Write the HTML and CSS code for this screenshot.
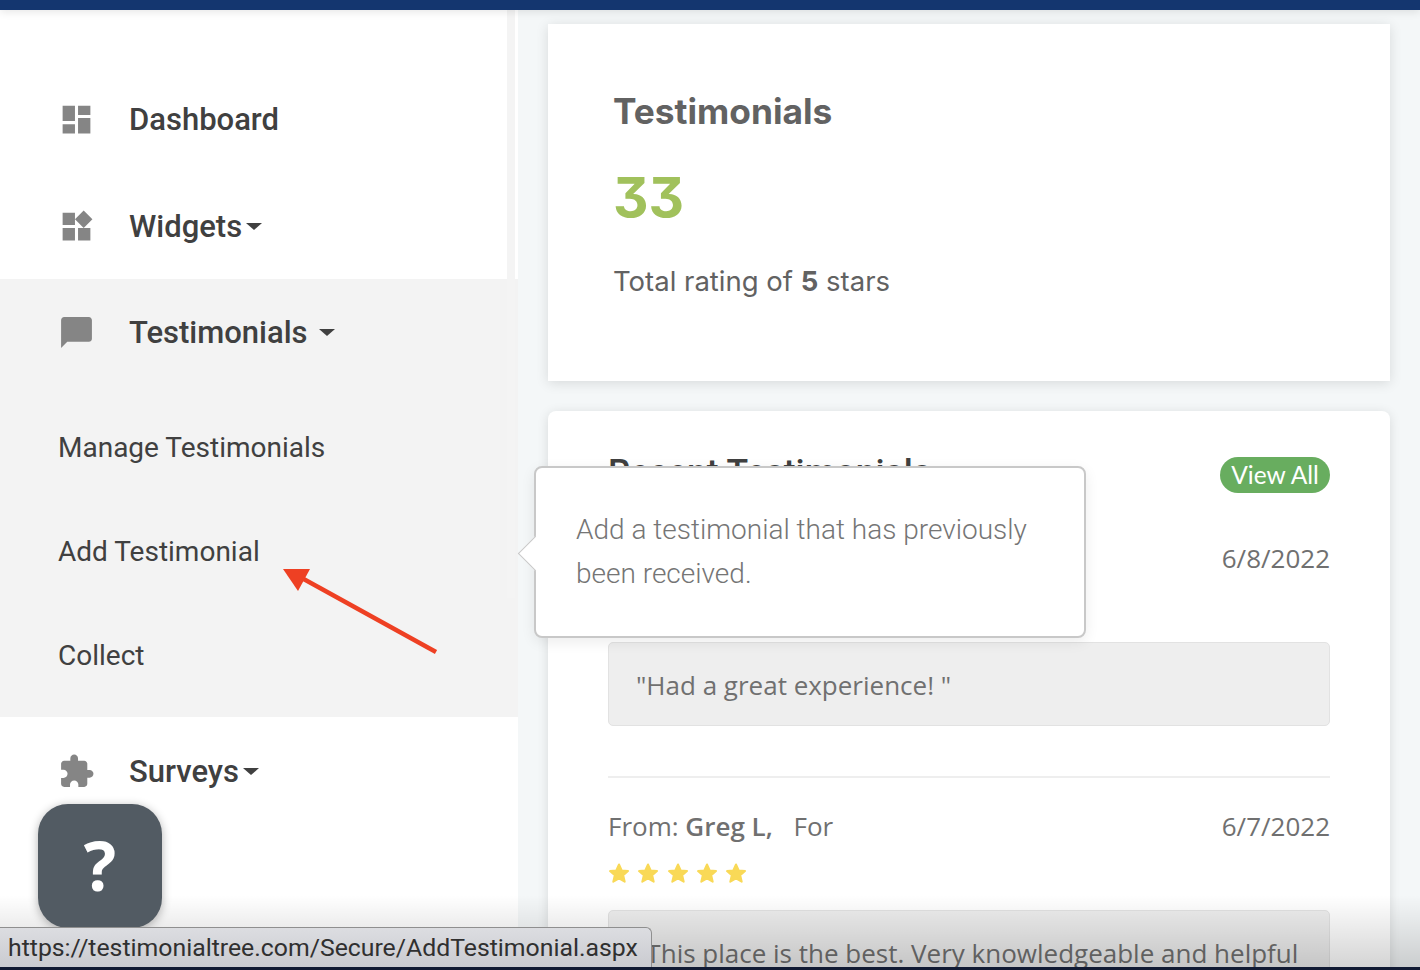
FILE: index.html
```html
<!DOCTYPE html>
<html lang="en">
<head>
  <meta charset="UTF-8">
  <title>Testimonials</title>
  <link rel="stylesheet" href="styles.css">
</head>
<body>
  <svg class="defs" width="0" height="0">
    <symbol id="star" viewBox="0 0 24 24">
      <path d="M12 3.500l2.700 6 6.300.6-4.800 4.200 1.500 6.400-5.700-3.400-5.700 3.400 1.500-6.400L3 10.100l6.300-.6z"/>
    </symbol>
  </svg>

  <div class="topbar"></div>

  <div class="layout">
    <aside class="sidebar">
      <a class="nav-item">
        <svg class="nav-icon" viewBox="0 0 24 24"><path d="M3 13h8V3H3v10zm0 8h8v-6H3v6zm10 0h8V11h-8v10zm0-18v6h8V3h-8z"/></svg>
        <span>Dashboard</span>
      </a>
      <a class="nav-item nudge">
        <svg class="nav-icon" viewBox="0 0 24 24"><path d="M13 13v8h8v-8h-8zM3 21h8v-8H3v8zM3 3v8h8V3H3zm13.660-1.310L11 7.340 16.660 13l5.660-5.660-5.660-5.650z"/></svg>
        <span>Widgets</span><i class="caret tight"></i>
      </a>
      <div class="nav-group">
        <a class="nav-item">
          <svg class="nav-icon" viewBox="0 0 24 24"><path d="M20 2H4c-1.100 0-1.990.9-1.990 2L2 22l4-4h14c1.100 0 2-.9 2-2V4c0-1.100-.9-2-2-2z"/></svg>
          <span>Testimonials</span><i class="caret"></i>
        </a>
        <div class="sub-list">
          <a class="sub-item">Manage Testimonials</a>
          <a class="sub-item">Add Testimonial</a>
          <a class="sub-item">Collect</a>
        </div>
      </div>
      <a class="nav-item nudge">
        <svg class="nav-icon" viewBox="0 0 24 24"><path d="M20.500 11H19V7c0-1.100-.9-2-2-2h-4V3.500C13 2.120 11.880 1 10.500 1S8 2.120 8 3.500V5H4c-1.100 0-1.990.9-1.990 2v3.800H3.500c1.490 0 2.700 1.210 2.700 2.700s-1.210 2.700-2.700 2.700H2V20c0 1.100.9 2 2 2h3.800v-1.500c0-1.490 1.210-2.700 2.700-2.700 1.490 0 2.700 1.210 2.700 2.700V22H17c1.100 0 2-.9 2-2v-4h1.500c1.380 0 2.500-1.120 2.500-2.500S21.880 11 20.500 11z"/></svg>
        <span>Surveys</span><i class="caret tight"></i>
      </a>
    </aside>

    <main class="main">
      <section class="card summary">
        <h2 class="summary-title">Testimonials</h2>
        <div class="summary-count">33</div>
        <p class="summary-text">Total rating of <b>5</b> stars</p>
      </section>

      <section class="card recent">
        <div class="recent-head">
          <h2 class="recent-title">Recent Testimonials</h2>
          <a class="pill">View All</a>
        </div>

        <article class="entry">
          <div class="entry-head">
            <span></span>
            <span>6/8/2022</span>
          </div>
          <div class="stars"></div>
          <div class="quote">"Had a great experience! "</div>
        </article>

        <article class="entry">
          <div class="entry-head">
            <span>From: <b>Greg L,</b> <span class="for">For</span></span>
            <span>6/7/2022</span>
          </div>
          <div class="stars">
            <svg><use href="#star"/></svg><svg><use href="#star"/></svg><svg><use href="#star"/></svg><svg><use href="#star"/></svg><svg><use href="#star"/></svg>
          </div>
          <div class="quote">"This place is the best. Very knowledgeable and helpful</div>
        </article>
      </section>
    </main>
  </div>

  <!-- things sitting on top of the page -->
  <div class="scroll-strip"></div>

  <div class="popover">
    <p>Add a testimonial that has previously been received.</p>
  </div>

  <svg class="annotation" width="160" height="90" viewBox="0 0 160 90">
    <path class="annotation-line" d="M156 83L20 8"/>
    <path class="annotation-head" d="M3 0H30L18 22z"/>
  </svg>

  <div class="page-fade"></div>
  <a class="help">?</a>
  <div class="status-url">https://testimonialtree.com/Secure/AddTestimonial.aspx</div>
  <div class="bottom-edge"></div>
</body>
</html>
```

FILE: styles.css
```css
* {
  box-sizing: border-box;
}
html, body {
  margin: 0;
  height: 970px;
  overflow: hidden;
}
body {
  position: relative;
  background: #f4f7f8;
  font-family: "Open Sans", sans-serif;
  color: #707070;
}
.defs {
  position: absolute;
}

.topbar {
  height: 10px;
  background: #14366f;
  box-shadow: 0 2px 8px rgba(0, 0, 0, 0.1);
  position: relative;
  z-index: 1;
}
.layout {
  display: flex;
  height: 960px;
  overflow: hidden;
}

/* sidebar */
.sidebar {
  width: 518px;
  flex-shrink: 0;
  padding-top: 56px;
  background: #fff;
}
.nav-item {
  display: flex;
  align-items: center;
  height: 106.5px;
  padding-left: 58px;
  font-family: Roboto, sans-serif;
  font-weight: 500;
  font-size: 31px;
  color: #404040;
}
.nav-item.nudge {
  padding-top: 2px;
}
.nav-icon {
  width: 37px;
  height: 37px;
  margin-right: 34px;
  flex-shrink: 0;
  fill: #858585;
}
.caret {
  width: 0;
  height: 0;
  margin-left: 11px;
  border-left: 8px solid transparent;
  border-right: 8px solid transparent;
  border-top: 7px solid #404040;
}
.caret.tight {
  margin-left: 4px;
}
.nav-group {
  height: 438px;
  background: #f3f3f3;
}
.sub-list {
  padding-top: 10px;
}
.sub-item {
  display: flex;
  align-items: center;
  height: 104px;
  padding-left: 58px;
  font-family: Roboto, sans-serif;
  font-size: 28px;
  color: #404040;
}
.scroll-strip {
  position: absolute;
  left: 507px;
  top: 10px;
  width: 8px;
  height: 588px;
  background: #f4f4f4;
}

/* main column */
.main {
  flex: 1;
  min-width: 0;
  padding: 14px 30px 0;
}
.card {
  background: #fff;
  box-shadow: 0 2px 12px rgba(0, 0, 0, 0.12);
}
.summary {
  height: 357px;
  margin-bottom: 30px;
  padding: 66px 65px 0;
}
.summary-title {
  margin: 0;
  font-family: Inter, sans-serif;
  font-weight: 700;
  font-size: 35.300px;
  line-height: 44px;
  color: #626262;
}
.summary-count {
  margin-top: 28px;
  font-family: Inter, sans-serif;
  font-feature-settings: "cv09";
  font-weight: 700;
  font-size: 55px;
  line-height: 70px;
  color: #a1c15c;
}
.summary-text {
  margin: 31px 0 0;
  font-family: Inter, sans-serif;
  font-size: 27.500px;
  line-height: 36px;
  color: #626262;
}
.summary-text b {
  font-weight: 700;
}
.recent {
  border-radius: 8px;
  padding: 46px 60px 0;
}
.recent-head {
  display: flex;
  justify-content: space-between;
  height: 81px;
}
.recent-title {
  margin: 0;
  font-family: Roboto, sans-serif;
  font-weight: 500;
  font-size: 35.500px;
  line-height: 30px;
  color: #404040;
}
.pill {
  width: 110px;
  height: 36px;
  border-radius: 18px;
  background: #68ad5f;
  color: #fff;
  font-family: Lato, sans-serif;
  font-size: 24.500px;
  line-height: 36px;
  text-align: center;
}
.entry {
  padding-bottom: 50px;
  margin-bottom: 28px;
  border-bottom: 2px solid #eee;
}
.entry-head {
  display: flex;
  justify-content: space-between;
  font-size: 26px;
  line-height: 40px;
  color: #707070;
}
.entry-head b {
  font-weight: 600;
}
.for {
  margin-left: 14px;
}
.stars {
  display: flex;
  gap: 5.300px;
  height: 64px;
  padding-top: 15px;
  margin-left: -1px;
}
.stars svg {
  width: 24px;
  height: 24px;
  fill: #f9d957;
  stroke: #f9d957;
  stroke-width: 2;
  stroke-linejoin: round;
}
.quote {
  height: 84px;
  padding: 0 27px;
  background: #eee;
  border: 1px solid #e2e2e2;
  border-radius: 5px;
  font-size: 26px;
  line-height: 84px;
  color: #707070;
  white-space: nowrap;
}

/* overlays */
.popover {
  position: absolute;
  left: 534px;
  top: 466px;
  width: 552px;
  height: 172px;
  padding: 40px 40px 0;
  background: #fff;
  border: 2px solid #c8c8c8;
  border-radius: 8px;
  box-shadow: 0 4px 14px rgba(0, 0, 0, 0.08);
  font-family: Roboto, sans-serif;
  font-weight: 300;
  font-size: 28px;
  line-height: 44px;
  color: #757575;
}
.popover p {
  margin: 0;
}
.popover::before {
  content: "";
  position: absolute;
  left: -13px;
  top: 73px;
  width: 24px;
  height: 24px;
  background: #fff;
  border-left: 1px solid #c8c8c8;
  border-bottom: 1px solid #c8c8c8;
  transform: rotate(45deg);
}
.annotation {
  position: absolute;
  left: 280px;
  top: 569px;
}
.annotation-line {
  stroke: #ee4023;
  stroke-width: 4.500;
  fill: none;
}
.annotation-head {
  fill: #ee4023;
}
.page-fade {
  position: absolute;
  left: 0;
  right: 0;
  top: 895px;
  height: 72px;
  background: linear-gradient(to bottom, rgba(0, 0, 0, 0), rgba(0, 0, 0, 0.17));
}
.help {
  position: absolute;
  left: 38px;
  top: 804px;
  width: 124px;
  height: 124px;
  border-radius: 30px;
  background: #525b63;
  box-shadow: 0 2px 10px rgba(0, 0, 0, 0.3);
  color: #fff;
  font-family: "Open Sans", sans-serif;
  font-weight: 700;
  font-size: 68px;
  line-height: 122px;
  text-align: center;
}
.status-url {
  position: absolute;
  left: 0;
  top: 927px;
  width: 652px;
  height: 40px;
  padding-left: 8px;
  background: linear-gradient(to bottom, #dcdde1, #cacbd0);
  border: 1px solid #8f8f8f;
  border-left: none;
  border-bottom: none;
  border-top-right-radius: 6px;
  font-family: Roboto, sans-serif;
  font-size: 24.800px;
  line-height: 40px;
  color: #303030;
  white-space: nowrap;
}
.bottom-edge {
  position: absolute;
  left: 0;
  right: 0;
  top: 967px;
  height: 3px;
  background: #111a33;
}
```
